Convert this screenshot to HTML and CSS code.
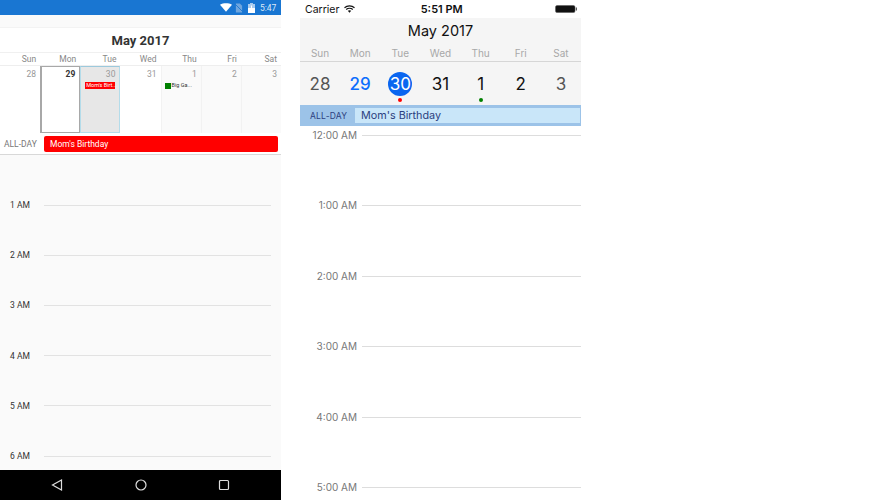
FILE: index.html
```html
<!DOCTYPE html>
<html lang="en">
<head>
    <meta charset="UTF-8">
    <title>Calendar day view</title>
    <link rel="stylesheet" href="styles.css">
</head>
<body>
    <!-- Android -->
    <div class="android">
        <div class="a-status">
            <svg class="a-wifi" width="12" height="9" viewBox="0 0 13 9"><path d="M0 1.600C3.800-.5 9.200-.5 13 1.600L6.500 9z" fill="#fff"/></svg>
            <svg class="a-sim" width="8" height="10" viewBox="0 0 9 10"><path d="M1 0h4.500L8 2.500V10H1z" fill="#6fa6de"/><path d="M0 .5L9 9.500" stroke="#1976d2" stroke-width="1"/></svg>
            <svg class="a-batt" width="7" height="10" viewBox="0 0 7 10"><path d="M2 0h3v1h2v9H0V1h2z" fill="#a9cbee"/><path d="M0 5h7v5H0z" fill="#fff"/><path d="M3.500 2.500V6" stroke="#fff"/></svg>
            <span class="a-clock">5:47</span>
        </div>
        <div class="a-gap"></div>
        <div class="a-month">May 2017</div>
        <div class="a-week">
            <span>Sun</span><span>Mon</span><span>Tue</span><span>Wed</span><span>Thu</span><span>Fri</span><span>Sat</span>
        </div>
        <div class="a-dates">
            <div class="a-cell">28</div>
            <div class="a-cell today">29</div>
            <div class="a-cell selected">30<span class="a-event red">Mom's Birt...</span></div>
            <div class="a-cell">31</div>
            <div class="a-cell next">1<span class="a-event"><i class="swatch"></i>Big Ga...</span></div>
            <div class="a-cell next">2</div>
            <div class="a-cell next">3</div>
        </div>
        <div class="a-allday">
            <span class="a-allday-label">ALL-DAY</span>
            <div class="a-allday-event">Mom's Birthday</div>
        </div>
        <div class="a-times">
            <div class="a-row"><span>1 AM</span><i></i></div>
            <div class="a-row"><span>2 AM</span><i></i></div>
            <div class="a-row"><span>3 AM</span><i></i></div>
            <div class="a-row"><span>4 AM</span><i></i></div>
            <div class="a-row"><span>5 AM</span><i></i></div>
            <div class="a-row"><span>6 AM</span><i></i></div>
        </div>
        <div class="a-nav">
            <svg width="12" height="12" viewBox="0 0 12 12"><path d="M10.500 1L1.500 6l9 5z" fill="none" stroke="#ddd" stroke-width="1.200"/></svg>
            <svg width="12" height="12" viewBox="0 0 12 12"><circle cx="6" cy="6" r="5" fill="none" stroke="#ddd" stroke-width="1.200"/></svg>
            <svg width="12" height="12" viewBox="0 0 12 12"><rect x="1.500" y="1.500" width="9" height="9" rx="1" fill="none" stroke="#ddd" stroke-width="1.200"/></svg>
        </div>
    </div>

    <!-- iOS -->
    <div class="ios">
        <div class="i-status">
            <div class="i-left">
                <span>Carrier</span>
                <svg width="11" height="8" viewBox="0 0 11 8"><path d="M.5 2.800C3.300.3 7.700.3 10.500 2.800M2.200 4.500C4 2.900 7 2.900 8.800 4.500" fill="none" stroke="#111" stroke-width="1.200"/><path d="M3.800 5.800C4.800 5 6.200 5 7.200 5.800L5.500 7.700z" fill="#111"/></svg>
            </div>
            <span class="i-clock">5:51 PM</span>
            <svg class="i-batt" width="22" height="8" viewBox="0 0 22 8"><rect x=".5" y=".5" width="19.500" height="7" rx="1.500" fill="#111" stroke="#555" stroke-width=".5"/><path d="M20.800 2.500h1v3h-1z" fill="#333"/></svg>
        </div>
        <div class="i-head">
            <div class="i-month">May 2017</div>
            <div class="i-week">
                <span>Sun</span><span>Mon</span><span>Tue</span><span>Wed</span><span>Thu</span><span>Fri</span><span>Sat</span>
            </div>
            <div class="i-dates">
                <div class="i-cell other"><b>28</b></div>
                <div class="i-cell today"><b>29</b></div>
                <div class="i-cell selected"><b>30</b><i class="dot red"></i></div>
                <div class="i-cell"><b>31</b></div>
                <div class="i-cell"><b>1</b><i class="dot green"></i></div>
                <div class="i-cell"><b>2</b></div>
                <div class="i-cell other"><b>3</b></div>
            </div>
        </div>
        <div class="i-allday">
            <span class="i-allday-label">ALL-DAY</span>
            <div class="i-allday-event">Mom's Birthday</div>
        </div>
        <div class="i-times">
            <div class="i-row"><span>12:00 AM</span><i></i></div>
            <div class="i-row"><span>1:00 AM</span><i></i></div>
            <div class="i-row"><span>2:00 AM</span><i></i></div>
            <div class="i-row"><span>3:00 AM</span><i></i></div>
            <div class="i-row"><span>4:00 AM</span><i></i></div>
            <div class="i-row"><span>5:00 AM</span><i></i></div>
        </div>
    </div>
</body>
</html>
```

FILE: styles.css
```css
html, body {
    margin: 0;
    padding: 0;
    height: 500px;
    overflow: hidden;
    background: #fff;
}

body {
    display: flex;
    gap: 19px;
}

i {
    display: block;
}

/* Android */
.android {
    width: 281px;
    height: 500px;
    display: flex;
    flex-direction: column;
    font-family: Roboto, sans-serif;
    background: #fafafa;
}

.a-status {
    height: 15px;
    background: #1976d2;
    display: flex;
    align-items: center;
    padding-left: 220px;
    box-sizing: border-box;
}

.a-sim {
    margin-left: 3px;
}

.a-batt {
    margin-left: 5px;
}

.a-clock {
    color: #dce9f7;
    font-size: 8.500px;
    margin-left: 5px;
}

.a-gap {
    height: 12px;
}

.a-month {
    height: 24px;
    line-height: 26px;
    background: #fff;
    border-top: 1px solid #f3f3f3;
    border-bottom: 1px solid #f0f0f0;
    text-align: center;
    font-size: 13px;
    font-weight: 700;
    color: #333;
}

.a-week {
    height: 12px;
    display: grid;
    grid-template-columns: repeat(7, 1fr);
    background: #fff;
    border-bottom: 1px solid #eee;
}

.a-week span {
    font-size: 8.500px;
    line-height: 13px;
    color: #888;
    text-align: right;
    padding-right: 4px;
}

.a-dates {
    height: 67px;
    display: grid;
    grid-template-columns: repeat(7, 1fr);
}

.a-cell {
    background: #fff;
    font-size: 8.500px;
    line-height: 10px;
    color: #999;
    text-align: right;
    padding: 3px 4px 0 0;
    box-sizing: border-box;
}

.a-cell.today {
    border: 1px solid #a8a8a8;
    border-left-width: 2px;
    font-weight: 700;
    color: #333;
    padding-top: 2px;
}

.a-cell.selected {
    background: #e7e7e7;
    border: 1px solid #b4dcea;
    border-top-color: #9cc9dc;
    padding-top: 2px;
}

.a-cell.next {
    background: #fafafa;
    border-left: 1px solid #f2f2f2;
}

.a-event {
    display: flex;
    align-items: center;
    height: 7px;
    margin: 3px 0 0 3px;
    font-size: 5.500px;
    line-height: 7px;
    color: #333;
    text-align: left;
    white-space: nowrap;
}

.a-event.red {
    width: 30px;
    margin-left: 4px;
    background: #ff0000;
    color: #fff;
    padding-left: 1px;
    box-sizing: border-box;
}

.swatch {
    width: 6px;
    height: 6px;
    background: #008000;
    margin-right: 1px;
}

.a-allday {
    height: 21px;
    display: flex;
    align-items: center;
    background: #fff;
    border-bottom: 1px solid #d8d8d8;
}

.a-allday-label {
    width: 44px;
    padding-left: 4px;
    box-sizing: border-box;
    font-size: 8.500px;
    color: #777;
}

.a-allday-event {
    width: 234px;
    height: 16px;
    background: #ff0000;
    border-radius: 2px;
    color: #fff;
    font-size: 8.500px;
    line-height: 17px;
    padding-left: 6px;
    box-sizing: border-box;
}

.a-times {
    flex: 1;
    padding-top: 25px;
    overflow: hidden;
}

.a-row {
    height: 50.200px;
    display: flex;
    align-items: center;
}

.a-row span {
    width: 44px;
    padding-left: 10px;
    box-sizing: border-box;
    font-size: 8.500px;
    color: #333;
}

.a-row i {
    width: 227px;
    height: 1px;
    background: #e2e2e2;
}

.a-nav {
    height: 30px;
    background: #000;
    display: flex;
    align-items: center;
    justify-content: space-between;
    padding: 0 51px;
}

/* iOS */
.ios {
    width: 281px;
    height: 500px;
    display: flex;
    flex-direction: column;
    font-family: Inter, Roboto, sans-serif;
    background: #fff;
}

.i-status {
    height: 18px;
    display: flex;
    align-items: center;
    justify-content: space-between;
    padding: 0 4px 0 5px;
    font-size: 10.500px;
    color: #111;
}

.i-left {
    display: flex;
    align-items: center;
    gap: 5px;
}

.i-clock {
    font-size: 11px;
    font-weight: 600;
    margin-right: 27px;
}

.i-head {
    height: 87px;
    background: #f5f5f5;
}

.i-month {
    height: 26px;
    line-height: 26px;
    font-size: 14.500px;
    color: #111;
    text-align: center;
}

.i-week {
    height: 17px;
    display: grid;
    grid-template-columns: repeat(7, 1fr);
    border-bottom: 1px solid #d6d6d6;
}

.i-week span {
    font-size: 10px;
    line-height: 18px;
    color: #a8a8a8;
    text-align: center;
}

.i-dates {
    display: grid;
    grid-template-columns: repeat(7, 1fr);
}

.i-cell {
    display: flex;
    flex-direction: column;
    align-items: center;
    padding-top: 10px;
}

.i-cell b {
    width: 24px;
    height: 24px;
    line-height: 24px;
    border-radius: 50%;
    text-align: center;
    font-size: 17px;
    font-weight: 400;
    color: #111;
}

.i-cell.other b {
    color: #555;
}

.i-cell.today b {
    color: #0d6efd;
    font-weight: 500;
}

.i-cell.selected b {
    background: #0a66f0;
    color: #fff;
}

.dot {
    width: 4px;
    height: 4px;
    border-radius: 50%;
    margin-top: 2px;
}

.dot.red {
    background: #ff0000;
}

.dot.green {
    background: #008000;
}

.i-allday {
    height: 21px;
    display: flex;
    align-items: center;
    background: #9cc3e8;
}

.i-allday-label {
    width: 55px;
    padding-left: 10px;
    box-sizing: border-box;
    font-size: 8.500px;
    letter-spacing: .2px;
    color: #2c3f80;
    white-space: nowrap;
}

.i-allday-event {
    width: 225px;
    height: 15px;
    line-height: 16px;
    background: #c9e6f9;
    padding-left: 6px;
    box-sizing: border-box;
    font-size: 10.800px;
    color: #2c3f80;
}

.i-times {
    flex: 1;
    padding-top: 2px;
    overflow: hidden;
}

.i-row {
    height: 70.400px;
    display: flex;
    align-items: flex-start;
}

.i-row span {
    width: 57px;
    box-sizing: border-box;
    text-align: right;
    font-size: 10px;
    line-height: 14px;
    color: #777;
    white-space: nowrap;
}

.i-row i {
    margin: 7px 0 0 5px;
    flex: 1;
    height: 1px;
    background: #ddd;
}
```
